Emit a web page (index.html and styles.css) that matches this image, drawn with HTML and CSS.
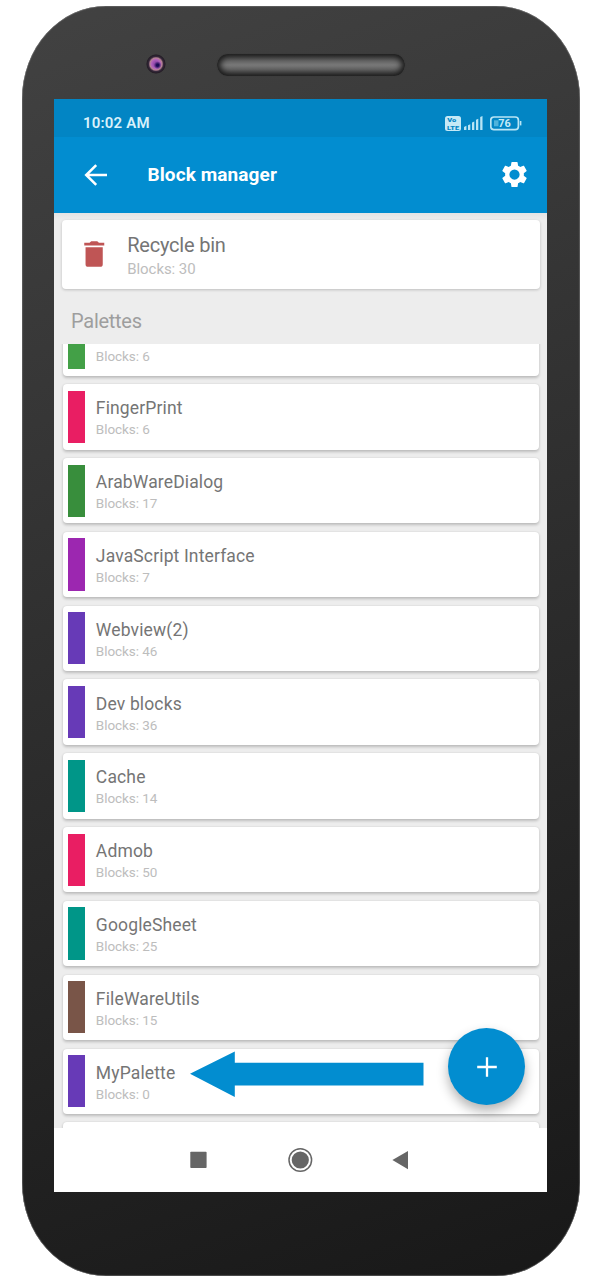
FILE: index.html
```html
<!DOCTYPE html>
<html lang="en">
<head>
<meta charset="utf-8">
<title>Block manager</title>
<link rel="stylesheet" href="styles.css">
</head>
<body>
<div class="phone">
  <div class="bezel-top"><span class="camera"></span><span class="speaker"></span></div>
  <main class="screen">
    <div class="status-bar">
      <span class="clock">10:02 AM</span>
      <svg class="volte" viewBox="0 0 16 15"><rect width="16" height="15" rx="2.5" fill="#c5e9f6"/><text x="2.2" y="6.3" textLength="9" lengthAdjust="spacingAndGlyphs">Vo</text><text x="2" y="13.5" textLength="12" lengthAdjust="spacingAndGlyphs">LTE</text></svg>
      <svg class="signal" viewBox="0 0 19 14"><path d="M0 11l2.4-1.2V14H0zM4 9.2l2.3-1V14H4zM8 6.4l2.3-1V14H8zM12 3.7l2.3-1V14H12zM16.2 1l2.3-1v14h-2.3z" fill="#b9e5f5"/></svg>
      <svg class="battery" viewBox="0 0 32 15"><rect x=".8" y="1" width="27.6" height="12.6" rx="3.2" fill="none" stroke="#b9e5f5" stroke-width="1.7"/><rect x="4" y="4.3" width="4.500" height="6" fill="#4fb3dc"/><path d="M29.800 5h1.600v4.400h-1.600z" fill="#b9e5f5"/><text x="8.3" y="11.3" textLength="12.500" lengthAdjust="spacingAndGlyphs">76</text></svg>
    </div>
    <header class="app-bar">
      <svg class="back" viewBox="0 0 24 22"><path d="M12.2 1.2L2.2 11l10 9.8M2.4 11H23" fill="none" stroke="#fff" stroke-width="2.500"/></svg>
      <h1>Block manager</h1>
      <svg class="gear" viewBox="2 2 20 20"><path fill="#fff" d="M19.43 12.98c.04-.32.07-.64.07-.98s-.03-.66-.07-.98l2.11-1.65c.19-.15.24-.42.12-.64l-2-3.46c-.12-.22-.39-.3-.61-.22l-2.49 1c-.52-.4-1.08-.73-1.69-.98l-.38-2.65C14.46 2.18 14.25 2 14 2h-4c-.25 0-.46.18-.49.42l-.38 2.65c-.61.25-1.17.59-1.69.98l-2.49-1c-.23-.09-.49 0-.61.22l-2 3.46c-.13.22-.07.49.12.64l2.11 1.65c-.04.32-.07.65-.07.98s.03.66.07.98l-2.11 1.65c-.19.15-.24.42-.12.64l2 3.46c.12.22.39.3.61.22l2.49-1c.52.4 1.08.73 1.69.98l.38 2.65c.03.24.24.42.49.42h4c.25 0 .46-.18.49-.42l.38-2.65c.61-.25 1.17-.59 1.69-.98l2.49 1c.23.09.49 0 .61-.22l2-3.46c.12-.22.07-.49-.12-.64l-2.11-1.65zM12 16.1a4.1 4.1 0 1 1 0-8.2 4.1 4.1 0 0 1 0 8.2z"/></svg>
    </header>
    <div class="content">
      <section class="card recycle">
        <svg class="bin" viewBox="0 0 20 26"><path fill="#bf5555" d="M0 1.8h5.3L7 .2h6l1.700 1.600H20v2.700H0zM1.300 6.200h17.200V23.200q0 2.600-2.600 2.600h-12q-2.600 0-2.600-2.600z"/></svg>
        <div class="labels"><span class="name">Recycle bin</span><span class="count">Blocks: 30</span></div>
      </section>
      <h2>Palettes</h2>
      <div class="list">
        <div class="card row"><i class="swatch green"></i><div class="labels"><span class="name"></span><span class="count">Blocks: 6</span></div></div>
        <div class="card row"><i class="swatch pink"></i><div class="labels"><span class="name">FingerPrint</span><span class="count">Blocks: 6</span></div></div>
        <div class="card row"><i class="swatch forest"></i><div class="labels"><span class="name">ArabWareDialog</span><span class="count">Blocks: 17</span></div></div>
        <div class="card row"><i class="swatch purple"></i><div class="labels"><span class="name">JavaScript Interface</span><span class="count">Blocks: 7</span></div></div>
        <div class="card row"><i class="swatch violet"></i><div class="labels"><span class="name">Webview(2)</span><span class="count">Blocks: 46</span></div></div>
        <div class="card row"><i class="swatch violet"></i><div class="labels"><span class="name">Dev blocks</span><span class="count">Blocks: 36</span></div></div>
        <div class="card row"><i class="swatch teal"></i><div class="labels"><span class="name">Cache</span><span class="count">Blocks: 14</span></div></div>
        <div class="card row"><i class="swatch pink"></i><div class="labels"><span class="name">Admob</span><span class="count">Blocks: 50</span></div></div>
        <div class="card row"><i class="swatch teal"></i><div class="labels"><span class="name">GoogleSheet</span><span class="count">Blocks: 25</span></div></div>
        <div class="card row"><i class="swatch brown"></i><div class="labels"><span class="name">FileWareUtils</span><span class="count">Blocks: 15</span></div></div>
        <div class="card row"><i class="swatch violet"></i><div class="labels"><span class="name">MyPalette</span><span class="count">Blocks: 0</span></div></div>
        <div class="card row"></div>
      </div>
      <svg class="pointer" viewBox="0 0 234 46"><path d="M0 22.700L44.800.500v11.200H233.500v22.700H44.800v11.500z" fill="#028dd0"/></svg>
      <button class="fab" aria-label="Add"><svg viewBox="0 0 20 20"><path d="M10 .2v19.600M.2 10h19.600" stroke="#fff" stroke-width="2.300"/></svg></button>
    </div>
    <nav class="nav-bar">
      <svg viewBox="0 0 220 26"><rect x=".3" y="4.800" width="16.300" height="16.200" rx=".8" fill="#666"/><circle cx="110.300" cy="13" r="11.300" fill="none" stroke="#666" stroke-width="1.500"/><circle cx="110.300" cy="13" r="8.600" fill="#666"/><path d="M202.400 13L218 4v18.200z" fill="#666"/></svg>
    </nav>
  </main>
</div>
</body>
</html>
```
FILE: styles.css
```css
* { box-sizing: border-box; }
body { margin: 0; background: #fff; font-family: Roboto, "Liberation Sans", sans-serif; }
.phone {
  width: 558.3px; height: 1269.700px; margin: 6px 0 0 22.200px;
  padding: 0 33.500px 0 32.100px;
  border-radius: 84px / 93px;
  background: linear-gradient(160deg, #424242, #181818);
  box-shadow: inset 0 0 1px .5px #777;
}
.bezel-top { height: 93px; display: flex; align-items: flex-start; padding: 47.800px 0 0 91.300px; }
.camera {
  width: 20.500px; height: 20.500px; border-radius: 50%;
  background: radial-gradient(circle at 58% 56%, #190b55 0 7%, transparent 24%), radial-gradient(circle, #9a4fb0 0 18%, #b263bb 32%, #b48391 43%, #35283b 53%, #241d26 64%, #3e3e3e 71%);
}
.speaker {
  width: 188px; height: 22px; margin: .3px 0 0 51px; border-radius: 11px;
  background: linear-gradient(#555, #787878 50%, #555);
  box-shadow: inset 0 0 6px 3px #161616, 0 0 1px #333;
}
.screen { height: 1092.700px; overflow: hidden; display: flex; flex-direction: column; background: #ededed; }
.status-bar { flex: none; height: 38px; background: #0285c4; display: flex; align-items: center; padding: 10px 25px 0 28.700px; }
.clock { flex: 1; font-size: 15px; font-weight: 600; color: #d8f1fb; letter-spacing: .2px; }
.status-bar text { font-family: Roboto, sans-serif; font-weight: 900; font-size: 6px; fill: #0285c4; }
.volte { width: 16px; height: 15px; }
.signal { width: 19px; height: 14px; margin-left: 3px; }
.battery { width: 32px; height: 15px; margin-left: 7px; }
.status-bar .battery text { font-weight: 700; font-size: 11.500px; fill: #c5ebf8; }
.app-bar { flex: none; height: 76px; background: #028dd0; display: flex; align-items: center; padding: 0 20px 1px 29.700px; }
.back { width: 24px; height: 22px; }
h1 { flex: 1; margin: 1px 0 0 39.500px; font-size: 19px; line-height: 24px; font-weight: 700; letter-spacing: .1px; color: #fff; }
.gear { width: 25px; height: 25px; }
.content { position: relative; flex: none; height: 915px; padding: 7px 7.300px 0 7.300px; display: flex; flex-direction: column; background: linear-gradient(#e4e4e4, #ededed 7px); }
.card { background: #fff; border-radius: 4px; box-shadow: 0 1.500px 3px rgba(0,0,0,.2), 0 0 2px rgba(0,0,0,.06); }
.labels { display: flex; flex-direction: column; white-space: nowrap; }
.name { color: #757575; }
.count { color: #bdbdbd; }
.recycle { flex: none; height: 69px; display: flex; padding: 13px 0 0 22.700px; box-shadow: 0 1px 3px rgba(0,0,0,.2); }
.bin { width: 20.500px; height: 26px; margin-top: 8px; }
.recycle .labels { margin-left: 22.500px; }
.recycle .name { font-size: 20px; line-height: 25px; letter-spacing: -.22px; }
.recycle .count { font-size: 15px; line-height: 22px; letter-spacing: -.07px; }
h2 { margin: 0; height: 55.300px; padding: 20px 0 0 9.500px; font-size: 20px; line-height: 24px; font-weight: 400; letter-spacing: -.28px; color: #9e9e9e; }
.list { height: 783.700px; overflow: hidden; margin: 0 -7.300px; padding: 0 7.700px 0 8.700px; display: flex; flex-direction: column; gap: 8.520px; }
.row { flex: none; height: 65.300px; display: flex; align-items: flex-start; padding: 6.500px 5.500px; }
.row:first-child { margin-top: -33.900px; }
.swatch { width: 16.400px; height: 52.200px; }
.green { background: #43a047; }
.pink { background: #e91e63; }
.forest { background: #388e3c; }
.purple { background: #9c27b0; }
.violet { background: #673ab7; }
.teal { background: #009688; }
.brown { background: #795548; }
.row .labels { margin: 6.600px 0 0 11px; }
.row .name { font-size: 17.500px; height: 22px; line-height: 22px; letter-spacing: .14px; }
.row .count { font-size: 13.500px; line-height: 20px; letter-spacing: -.06px; }
.pointer { position: absolute; left: 135.300px; top: 838px; width: 234px; height: 46px; }
.fab { position: absolute; left: 394px; top: 815px; width: 77px; height: 77px; padding: 0; border: 0; border-radius: 50%; background: #028dd0; display: grid; place-items: center; box-shadow: 0 6px 12px rgba(0,0,0,.3); }
.fab svg { width: 20px; height: 20px; }
.nav-bar { flex: 1; background: #fff; padding: 19px 0 0 136px; }
.nav-bar svg { display: block; width: 220px; height: 26px; }
```
